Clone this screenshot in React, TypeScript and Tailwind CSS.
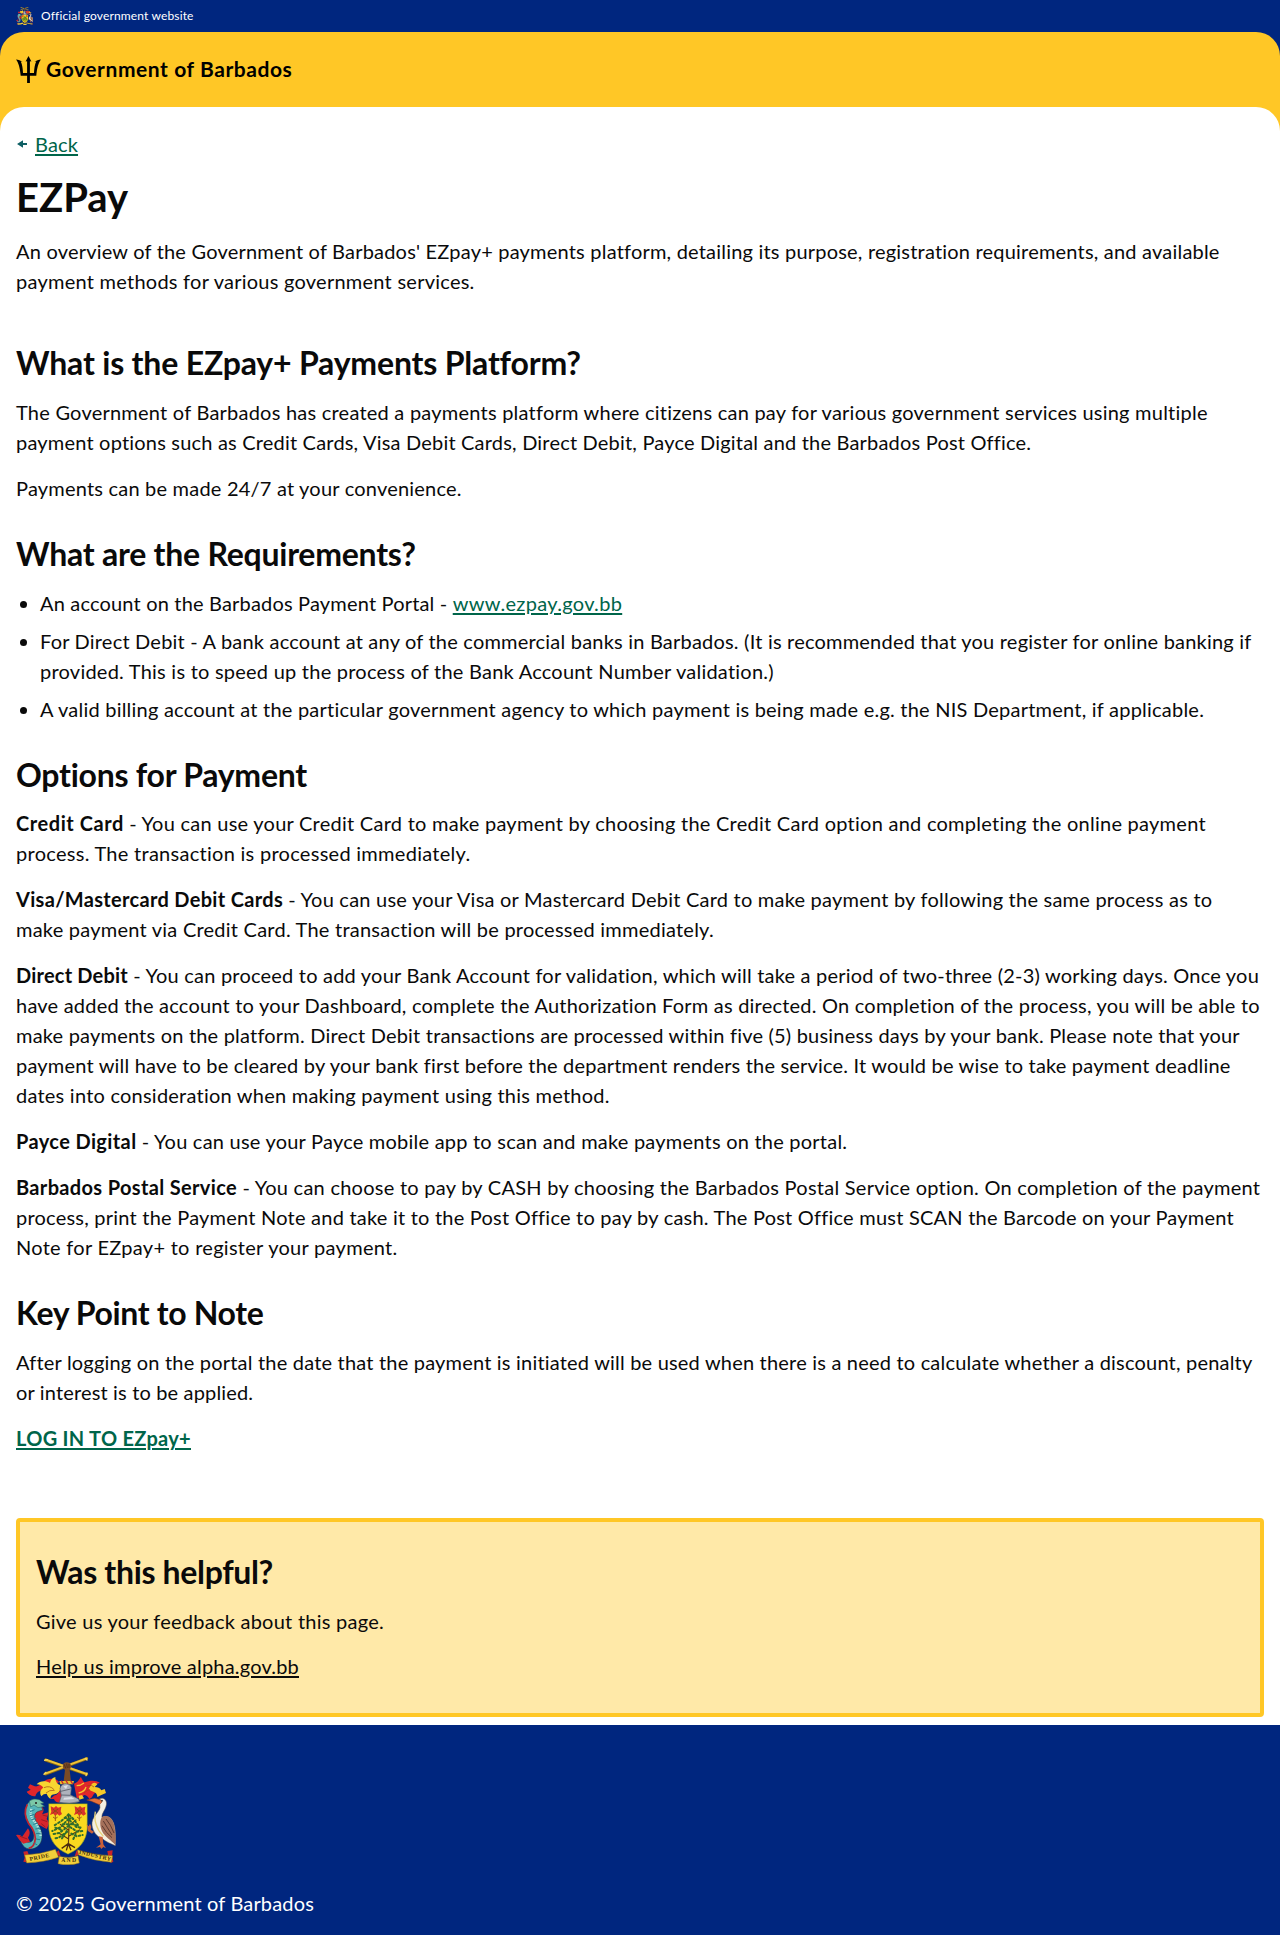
import type { ReactNode } from "react";

function CoatOfArms({ className, motto = false }: { className: string; motto?: boolean }) {
  return (
    <svg viewBox="48 52 300 324" preserveAspectRatio="none" className={className} aria-hidden="true">
      {/* crossed canes held by a fist */}
      <g strokeLinecap="round">
        <path d="M137 61 260 104M260 57 136 103" stroke="#8a6a14" strokeWidth="9" />
        <path d="M137 60 260 103M260 56 136 102" stroke="#ecc43a" strokeWidth="6" />
        <path d="M134 62l8-2M258 108l3-8M132 104l6-6M256 56l5 5" stroke="#f4d65c" strokeWidth="4" />
      </g>
      <path d="M190 72q8-7 20-2l4 10-5 12 4 32h-22l4-32-7-10z" fill="#7a4b27" />
      <path d="M193 74l4 12M200 72l2 13M207 73v12" stroke="#3b2210" strokeWidth="2" />
      {/* mantling */}
      <path d="M178 128c-10-14-34-14-50 0-8 8-14 14-24 12l-14-6-6 10 8 6-12 6c4 8 16 14 26 14 2-8 6-14 14-16 12-4 20-8 26-14z" fill="#e0262b" />
      <path d="M180 136c-8-2-14-10-14-24-8 2-14 8-16 18-12-8-32-6-40 4 10 0 16 4 20 10-10 6-12 16-6 26 4-6 10-8 16-8 2 6 6 12 12 16-2-10 4-14 12-14 8-2 14-6 18-14z" fill="#f8d631" />
      <path d="M150 178c6-2 8-10 18-12 6-4 10-10 12-16l6 24-6 14q-14 2-18-10z" fill="#e0262b" />
      <path d="M222 132c10-2 16-12 20-20 4 2 4 12 12 16 14-6 34-8 46 2-12 2-16 8-18 14 14 0 22 8 20 20-6-6-14-6-20-2-4 8-8 14-14 16-4-8-10-12-16-12-6 8-14 12-22 8z" fill="#e0262b" />
      <path d="M276 132q10-6 16 2l-8 8q14 0 20 10l10-4 4 12-14 6-12 6q0-12-12-16-8-2-14-8zM236 168l10-2 6 10-14 4z" fill="#f5c928" />
      <path d="M230 138q12 0 22-8M236 160q18-4 22-18" stroke="#f8c82c" strokeWidth="4" fill="none" />
      <path d="M132 144q18-8 30 6M262 138q14-4 20 4M138 160q10-10 26-8M252 160q10-10 18-10" stroke="#9a4a12" strokeWidth="2" fill="none" />
      {/* helmet */}
      <path d="M178 124h44l-3 10h-38z" fill="#e8be28" />
      <path d="M184 123l6 10M198 123l6 10M212 123l6 10" stroke="#d1242a" strokeWidth="4" />
      <path d="M180 146q4-14 18-14 14 0 16 12l-2 22 24 12 2 8q-30 8-60 2l6-20z" fill="#aeb2bc" stroke="#555a68" strokeWidth="2" />
      <path d="M178 156l34-8M184 166l28 1" stroke="#555a68" strokeWidth="2.5" />
      <path d="M190 140l14-4-6 12zM192 174l22-2 10 6-34 2z" fill="#dde0e7" />
      {/* dolphin */}
      <path d="M122 200c12 4 10 16 4 24l20-6-6 20 8 12-8 18-22-12-14 24c-6-12-18-22-22-38s6-38 16-46z" fill="#d5252c" />
      <path d="M108 180c-18-2-32 14-32 36 0 28 18 42 24 62 4 16 0 30-14 30-10 0-18-8-22-18l-4 2c2 22 14 36 30 36 24 0 38-18 36-44-2-24-22-36-22-54 0-12 10-16 24-18-2-8-8-30-20-32z" fill="#55b5b8" stroke="#28333c" strokeWidth="1.5" />
      <path d="M82 194q-14 26 4 58 18 20 20 44-2 26-20 30" stroke="#c22430" strokeWidth="5" fill="none" />
      <path d="M94 208q-6 20 8 36 18 22 20 46" stroke="#bce3df" strokeWidth="7" strokeDasharray="4 3" fill="none" />
      <path d="M90 216l14-6M90 228l14-4M94 240l14-4M100 254l14-4M106 268l14-2M108 282l14-1M108 298l12 2M102 310l10 6" stroke="#287f91" strokeWidth="3" />
      <path d="M88 184q12-10 30-4l14 10-10 2 12 8-20 4-12-8-10 6z" fill="#7cc8a7" stroke="#235a61" strokeWidth="1.5" />
      <circle cx="108" cy="190" r="3" fill="#201a1a" />
      <path d="M48 286q14-2 18 6l18-26q10 14 0 28l6 12-20 6q-12-8-22-26z" fill="#d5252c" />
      <path d="M128 226l14 4M124 240l18 6M124 252l12 10M60 290l22 8" stroke="#7d1420" strokeWidth="2" />
      {/* shield */}
      <path d="M146 192h116v76q-4 52-58 76-54-24-58-76z" fill="#f9d91f" stroke="#3f6f3d" strokeWidth="1.5" />
      <path d="M152 200l10 4 6-5 6 5 10-3-2 14 4 8-8 5-6-5-6 6-6-7-10 4 4-10zM224 200l10 4 6-5 6 5 10-3-2 14 4 8-8 5-6-5-6 6-6-7-10 4 4-10z" fill="#d8322a" />
      <path d="M158 208l16 12M174 208l-16 12M230 208l16 12M246 208l-16 12" stroke="#8c4a12" strokeWidth="3" />
      <path d="M166 226v18M159 232l7 5 7-5M238 226v18M231 232l7 5 7-5" stroke="#a35a17" strokeWidth="3" fill="none" />
      {/* bearded fig tree */}
      <path d="M205 222l2 40-2 56M206 298l-30-18M206 290l34-20M206 272l-26-18M207 258l22-18" stroke="#5a3a14" strokeWidth="3.5" fill="none" />
      <path d="M205 312l-20 14M205 312l20 12M205 312l-6 20M205 312l8 20" stroke="#4a2c10" strokeWidth="4" fill="none" />
      <g stroke="#2f6e2c" strokeWidth="6" strokeLinecap="round" strokeDasharray="5 7" fill="none">
        <path d="M206 224l-22 20-22 14M208 226l14 14 12 16M205 238l-22 24-26 12M209 242l20 20 18 2M206 258l-28 22-24 4M210 262l22 14 18-2M202 276l-26 18-12 2M214 282l16 8 18-4M194 234l24 4M188 254l36 0M186 296l14-22M220 298l10-22M166 264l18 6M226 256l16 10" />
      </g>
      {/* pelican */}
      <path d="M298 178c14-8 26 6 20 22-4 14-14 22-12 34 6-6 20-6 28 4 12 14 14 40 12 80-14-6-30-12-40-22-16-4-28-22-30-40-2-24 20-36 24-52z" fill="#f4efe2" stroke="#6a584a" strokeWidth="1.5" />
      <path d="M306 232c16-8 30 2 36 22 4 20 6 44 4 62-12-14-32-24-40-42-6-14-8-30 0-42z" fill="#a5705a" />
      <path d="M310 244q12 20 26 42M318 238q14 16 24 42M306 258q12 22 30 36" stroke="#5d3a31" strokeWidth="3" fill="none" />
      <path d="M286 216q-6 26 10 56l14 18" stroke="#e8d27a" strokeWidth="4" fill="none" />
      <path d="M302 180l-18-4-24 5 14 4 24 10 8-8z" fill="#e5713a" stroke="#803116" strokeWidth="1.5" />
      <circle cx="306" cy="183" r="2.5" fill="#2a1a14" />
      <path d="M276 282l-12-8-4-20 6 6 4-8 4 10-2 8 10 6zM296 290l6 24-14 10 12-2 4 6 6-6 8 4-8-12-2-22z" fill="#c9603a" />
      {/* motto ribbon */}
      <path d="M70 336l12-2 4 10-6 24-10-2 4-12zM338 332l-16 2 2 12 8 24 8-4-4-16zM162 344l14-12 6 18zM244 344l-14-12-6 18z" fill="#c9252b" />
      <path d="M74 346q48-2 92-17l10 24q-46 16-96 17zM178 350q28 8 56-2l4 22q-30 10-64 2zM232 330q48 16 106 18l-4 20q-52-4-98-22z" fill="#f2cf3a" stroke="#8c6b14" strokeWidth="1.5" />
      {motto && (
        <g fontFamily="Liberation Serif, serif" fontWeight="700" fontSize="17" fill="#3d2b0c">
          <text transform="translate(90 364) rotate(-12)" textLength="60">PRIDE</text>
          <text transform="translate(184 368)" textLength="44">AND</text>
          <text transform="translate(236 342) rotate(13)" textLength="98">INDUSTRY</text>
        </g>
      )}
    </svg>
  );
}

function Trident() {
  return (
    <svg viewBox="0 0 25 27" className="h-[27px] w-[25px]" fill="#000" aria-hidden="true">
      <path d="M12.5 0 15.4 5.6 13.9 5.2V17h4.1c.2-4.500 .7-8.500 2.200-11.500l-1.700.6C20.400 4.600 22.500 3.700 25 3.500c-2.500 3-4 8.500-4.700 16.200h-6.400V27h-2.800v-7.300H4.700C4 12 2.500 6.500 0 3.500c2.500.2 4.600 1.100 6.500 2.600l-1.700-.6C6.300 8.500 6.800 12.500 7 17h4.100V5.200l-1.500.4z" />
    </svg>
  );
}

function BackArrow() {
  return (
    <svg viewBox="0 0 10 8" className="mx-px h-2 w-2.5" fill="#0e5f64" aria-hidden="true">
      <path d="M0 4 6 .3V3h4v2H6v2.700z" />
    </svg>
  );
}

function Line({ className, children }: { className: string; children: ReactNode }) {
  return <span className={`block whitespace-pre ${className}`}>{children}</span>;
}

function Heading({ className, children }: { className: string; children: ReactNode }) {
  return <h2 className={`-mb-px whitespace-pre pt-px text-[32px] leading-[36.8px] font-bold ${className}`}>{children}</h2>;
}

const link = "text-[#00654a] underline decoration-2 underline-offset-2";

export default function App() {
  return (
    <div className="flex h-[1935px] w-full flex-col overflow-hidden bg-white font-['Lato',sans-serif] text-xl leading-[30px] text-[#0a0a0a]">
      <div className="bg-[#00267f]">
        <div className="flex h-8 items-center gap-2 px-4 text-xs text-white">
          <CoatOfArms className="h-[18px] w-[17px]" />
          <span className="tracking-[0.15px]">Official government website</span>
        </div>
        <div className="rounded-t-3xl bg-[#ffc726]">
          <header className="flex h-[75px] items-center gap-[5px] px-4 text-black">
            <Trident />
            <span className="pb-px text-[21px] font-bold tracking-[0.57px]">Government of Barbados</span>
          </header>
          <div className="h-6 rounded-t-3xl bg-white" />
        </div>
      </div>

      <main className="flex flex-1 flex-col px-4">
        <div className="-mt-0.5 flex h-[30px] items-center gap-[7px]">
          <BackArrow />
          <a className={`tracking-[0.15px] ${link}`}>Back</a>
        </div>
        <h1 className="mt-[15px] text-[40px] leading-[46px] font-bold">EZPay</h1>

        <p className="mt-4">
          <Line className="tracking-[0.202px]">An overview of the Government of Barbados' EZpay+ payments platform, detailing its purpose, registration requirements, and available</Line>
          <Line className="tracking-[0.249px]">payment methods for various government services.</Line>
        </p>

        <Heading className="mt-12 tracking-[-0.185px]">What is the EZpay+ Payments Platform?</Heading>
        <p className="mt-4">
          <Line className="tracking-[0.23px]">The Government of Barbados has created a payments platform where citizens can pay for various government services using multiple</Line>
          <Line className="tracking-[0.194px]">payment options such as Credit Cards, Visa Debit Cards, Direct Debit, Payce Digital and the Barbados Post Office.</Line>
        </p>
        <p className="mt-4 tracking-[0.205px]">Payments can be made 24/7 at your convenience.</p>

        <Heading className="mt-8 tracking-[-0.24px]">What are the Requirements?</Heading>
        <ul className="mt-4 list-disc space-y-2 pl-6">
          <li>
            <Line className="tracking-[0.176px]">An account on the Barbados Payment Portal - <a className={`tracking-[0.322px] ${link}`}>www.ezpay.gov.bb</a></Line>
          </li>
          <li>
            <Line className="tracking-[0.205px]">For Direct Debit - A bank account at any of the commercial banks in Barbados. (It is recommended that you register for online banking if</Line>
            <Line className="tracking-[0.235px]">provided. This is to speed up the process of the Bank Account Number validation.)</Line>
          </li>
          <li>
            <Line className="tracking-[0.227px]">A valid billing account at the particular government agency to which payment is being made e.g. the NIS Department, if applicable.</Line>
          </li>
        </ul>

        <Heading className="mt-8 tracking-[-0.261px]">Options for Payment</Heading>
        <div className="mt-4 space-y-4">
          <p>
            <Line className="tracking-[0.256px]"><b className="tracking-[0.56px]">Credit Card</b> - You can use your Credit Card to make payment by choosing the Credit Card option and completing the online payment</Line>
            <Line className="tracking-[0.28px]">process. The transaction is processed immediately.</Line>
          </p>
          <p>
            <Line className="tracking-[0.226px]"><b className="tracking-[0.318px]">Visa/Mastercard Debit Cards</b> - You can use your Visa or Mastercard Debit Card to make payment by following the same process as to</Line>
            <Line className="tracking-[0.235px]">make payment via Credit Card. The transaction will be processed immediately.</Line>
          </p>
          <p>
            <Line className="tracking-[0.212px]"><b className="tracking-[0.204px]">Direct Debit</b> - You can proceed to add your Bank Account for validation, which will take a period of two-three (2-3) working days. Once you</Line>
            <Line className="tracking-[0.216px]">have added the account to your Dashboard, complete the Authorization Form as directed. On completion of the process, you will be able to</Line>
            <Line className="tracking-[0.2px]">make payments on the platform. Direct Debit transactions are processed within five (5) business days by your bank. Please note that your</Line>
            <Line className="tracking-[0.188px]">payment will have to be cleared by your bank first before the department renders the service. It would be wise to take payment deadline</Line>
            <Line className="tracking-[0.231px]">dates into consideration when making payment using this method.</Line>
          </p>
          <p>
            <Line className="tracking-[0.225px]"><b className="tracking-[0.386px]">Payce Digital</b> - You can use your Payce mobile app to scan and make payments on the portal.</Line>
          </p>
          <p>
            <Line className="tracking-[0.258px]"><b className="tracking-[0.344px]">Barbados Postal Service</b> - You can choose to pay by CASH by choosing the Barbados Postal Service option. On completion of the payment</Line>
            <Line className="tracking-[0.225px]">process, print the Payment Note and take it to the Post Office to pay by cash. The Post Office must SCAN the Barcode on your Payment</Line>
            <Line className="tracking-[0.284px]">Note for EZpay+ to register your payment.</Line>
          </p>
        </div>

        <Heading className="mt-8 tracking-[-0.35px]">Key Point to Note</Heading>
        <p className="mt-4">
          <Line className="tracking-[0.197px]">After logging on the portal the date that the payment is initiated will be used when there is a need to calculate whether a discount, penalty</Line>
          <Line className="tracking-[0.16px]">or interest is to be applied.</Line>
        </p>
        <p className="mt-4">
          <a className={`font-bold tracking-[0.295px] ${link}`}>LOG IN TO EZpay+</a>
        </p>

        <section className="mt-auto mb-2 h-[199px] rounded border-4 border-[#ffc726] bg-[#ffe9a8] px-4 pt-[31px]">
          <Heading className="tracking-[-0.343px]">Was this helpful?</Heading>
          <p className="mt-4 tracking-[0.251px]">Give us your feedback about this page.</p>
          <p className="mt-[15px]">
            <a className="tracking-[0.201px] underline decoration-2 underline-offset-2">Help us improve alpha.gov.bb</a>
          </p>
        </section>
      </main>

      <footer className="h-[210px] bg-[#00267f] px-4 pt-8 text-white">
        <CoatOfArms className="h-[108px] w-[100px]" motto />
        <p className="mt-[23px] tracking-[0.159px]">© 2025 Government of Barbados</p>
      </footer>
    </div>
  );
}
